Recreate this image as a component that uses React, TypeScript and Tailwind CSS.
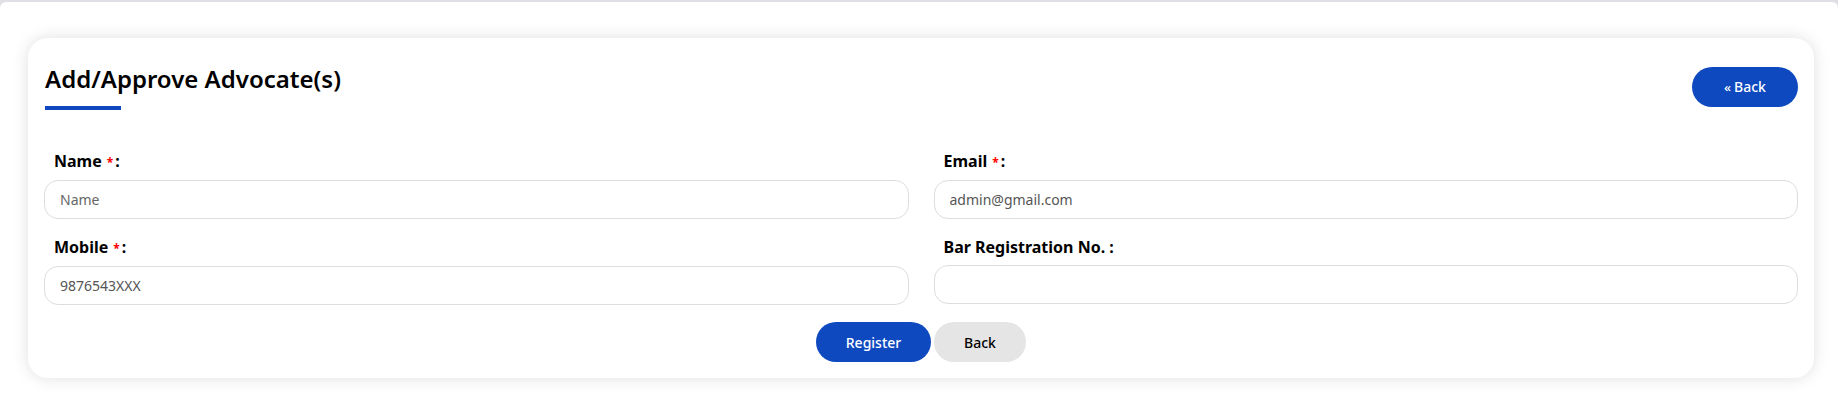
import React from "react";

const fields = [
  { label: "Name", required: true, value: "", placeholder: "Name" },
  { label: "Email", required: true, value: "admin@gmail.com", placeholder: "" },
  { label: "Mobile", required: true, value: "9876543XXX", placeholder: "" },
  { label: "Bar Registration No.", required: false, value: "", placeholder: "" },
];

function Field({ label, required, value, placeholder }: (typeof fields)[number]) {
  return (
    <div className="flex flex-col">
      <label className="mb-[7px] pl-[10px] text-[16px] font-bold leading-[21px] text-black">
        {label}
        {required ? (
          <span className="ml-[5px] mr-[2px] text-[12px] text-[#ff0000]">*</span>
        ) : (
          " "
        )}
        :
      </label>
      <input
        readOnly
        defaultValue={value}
        placeholder={placeholder}
        className="h-[39px] w-full rounded-[14px] border border-[#dddddd] bg-white px-[15px] text-[14px] text-[#555555] outline-none placeholder:text-[#666666]"
      />
    </div>
  );
}

export default function App() {
  return (
    <div
      className="h-[410px] w-full bg-[#dfdfe6] pt-[2px]"
      style={{ fontFamily: "'Noto Sans', 'Open Sans', sans-serif" }}
    >
      <div className="h-full rounded-t-[6px] bg-white pl-[28px] pr-[24px] pt-[36px]">
        <div className="rounded-[20px] bg-white px-[16px] pb-[16px] pt-[24px] shadow-[0_0_16px_rgba(0,0,0,0.13)]">
          {/* Header */}
          <div className="flex items-center justify-between pl-[1px]">
            <div>
              <h2 className="text-[24px] font-semibold leading-[33px] text-black">
                Add/Approve Advocate(s)
              </h2>
              <div className="mt-[11px] h-[4px] w-[76px] bg-[#0e49bf]" />
            </div>
            <button className="mt-[2px] h-[40px] w-[106px] rounded-full bg-[#0e49bf] text-[14px] font-medium text-white">
              <span className="mr-[3px] text-[13px]">«</span>Back
            </button>
          </div>

          {/* Form */}
          <div className="mt-[41px] grid grid-cols-2 gap-x-[25px] gap-y-[18px]">
            {fields.map((f) => (
              <Field key={f.label} {...f} />
            ))}
          </div>

          <div className="mt-[17px] flex justify-center gap-[3px]">
            <button className="h-[40px] w-[115px] rounded-full bg-[#0e49bf] text-[14px] font-medium text-white">
              Register
            </button>
            <button className="h-[40px] w-[92px] rounded-full bg-[#e5e5e5] text-[14px] font-medium text-black">
              Back
            </button>
          </div>
        </div>
      </div>
    </div>
  );
}
